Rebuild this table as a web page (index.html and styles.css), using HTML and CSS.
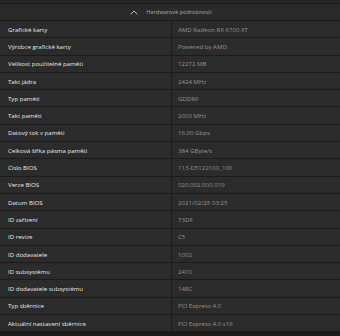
FILE: index.html
```html
<!DOCTYPE html>
<html lang="cs">
<head>
<meta charset="utf-8">
<link rel="stylesheet" href="styles.css">
</head>
<body>
<div class="page">
  <div class="topstrip"></div>
  <div class="header">
    <svg class="chev" width="8" height="5" viewBox="0 0 8 5"><path d="M0.8 4.2 L4 1 L7.2 4.2" fill="none" stroke="#cfcfcf" stroke-width="0.9"/></svg>
    <span class="htitle">Hardwarové podrobnosti</span>
  </div>
  <div class="list">
    <div class="row"><div class="k">Grafické karty</div><div class="v">AMD Radeon RX 6700 XT</div></div>
    <div class="row"><div class="k">Výrobce grafické karty</div><div class="v">Powered by AMD</div></div>
    <div class="row"><div class="k">Velikost použitelné paměti</div><div class="v">12272 MB</div></div>
    <div class="row"><div class="k">Takt jádra</div><div class="v">2424 MHz</div></div>
    <div class="row"><div class="k">Typ paměti</div><div class="v">GDDR6</div></div>
    <div class="row"><div class="k">Takt paměti</div><div class="v">2000 MHz</div></div>
    <div class="row"><div class="k">Datový tok v paměti</div><div class="v">16.00 Gbps</div></div>
    <div class="row"><div class="k">Celková šířka pásma paměti</div><div class="v">384 GByte/s</div></div>
    <div class="row"><div class="k">Číslo BIOS</div><div class="v">113-D5122100_100</div></div>
    <div class="row"><div class="k">Verze BIOS</div><div class="v">020.002.000.019</div></div>
    <div class="row"><div class="k">Datum BIOS</div><div class="v">2021/02/25 03:25</div></div>
    <div class="row"><div class="k">ID zařízení</div><div class="v">73DF</div></div>
    <div class="row"><div class="k">ID revize</div><div class="v">C5</div></div>
    <div class="row"><div class="k">ID dodavatele</div><div class="v">1002</div></div>
    <div class="row"><div class="k">ID subsystému</div><div class="v">2410</div></div>
    <div class="row"><div class="k">ID dodavatele subsystému</div><div class="v">148C</div></div>
    <div class="row"><div class="k">Typ sběrnice</div><div class="v">PCI Express 4.0</div></div>
    <div class="row"><div class="k">Aktuální nastavení sběrnice</div><div class="v">PCI Express 4.0 x16</div></div>
  </div>
</div>
</body>
</html>
```
FILE: styles.css
```css
html, body {
  margin: 0;
  padding: 0;
  background: #1b1b1b;
}
body {
  width: 340px;
  height: 336px;
  overflow: hidden;
  font-family: "Open Sans", "Noto Sans", sans-serif;
  -webkit-font-smoothing: antialiased;
}
.page {
  display: flex;
  flex-direction: column;
  gap: 1px;
}
.topstrip {
  height: 3px;
  background: #262626;
}
.header {
  height: 16px;
  background: #2a2a2a;
  display: flex;
  align-items: center;
  justify-content: center;
  gap: 8px;
  padding-left: 2px;
}
.chev {
  display: block;
}
.htitle {
  font-size: 5.6px;
  color: #a8a8a8;
}
.list {
  display: flex;
  flex-direction: column;
  gap: 1px;
}
.row {
  display: grid;
  grid-template-columns: 171px 1fr;
  column-gap: 1px;
  height: 16.3px;
}
.k, .v {
  background: #2b2b2b;
  display: flex;
  align-items: center;
  font-size: 6.1px;
  white-space: nowrap;
}
.k {
  padding-left: 8px;
  color: #e8e8e8;
}
.v {
  padding-left: 6px;
  color: #959595;
}
```
